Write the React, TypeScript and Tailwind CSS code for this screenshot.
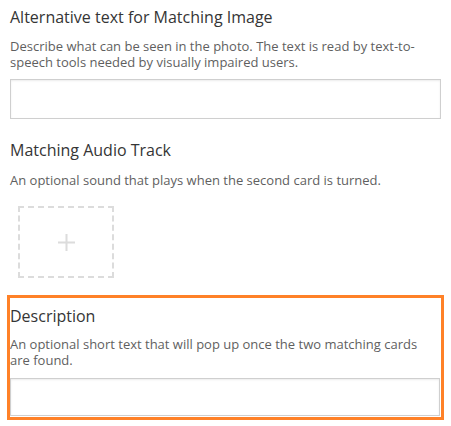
import React from "react";

const Field: React.FC<{ title: string; desc: string; descTop: string }> = ({ title, desc, descTop }) => (
  <>
    <h2 className="text-[16px] leading-[24px] font-normal text-[#353535]">{title}</h2>
    <p className={`${descTop} text-[13px] leading-[16px] text-[#5f5f5f]`}>{desc}</p>
  </>
);

export default function App() {
  return (
    <div className="w-[451px] h-[426px] overflow-hidden bg-white font-['Open_Sans',sans-serif]">
      <section className="pl-[10px] pr-[10px] pt-[5px]">
        <Field
          title="Alternative text for Matching Image"
          desc="Describe what can be seen in the photo. The text is read by text-to-speech tools needed by visually impaired users."
          descTop="mt-[9px]"
        />
        <input
          type="text"
          className="mt-[9px] block h-[40px] w-[431px] border border-[#cfcfcf] bg-white shadow-[inset_0_1px_2px_rgba(0,0,0,0.08)] outline-none"
        />
      </section>

      <section className="pl-[10px] pr-[10px] pt-[19px]">
        <Field
          title="Matching Audio Track"
          desc="An optional sound that plays when the second card is turned."
          descTop="mt-[10px]"
        />
        <button className="ml-[8px] mt-[18px] flex h-[72px] w-[96px] items-center justify-center border-2 border-dashed border-[#dcdcdc] bg-white">
          <svg width="17" height="17" viewBox="0 0 17 17">
            <path d="M8.5 0v17M0 8.5h17" stroke="#dcdcdc" strokeWidth="2" />
          </svg>
        </button>
      </section>

      <section className="ml-[7px] mt-[17px] w-[437px] border-[3px] border-[#ff8128] pr-[1px] pb-[1px] pt-[6px]">
        <Field
          title="Description"
          desc="An optional short text that will pop up once the two matching cards are found."
          descTop="mt-[8px]"
        />
        <input
          type="text"
          className="mt-[10px] block h-[38px] w-[430px] border border-[#cfcfcf] bg-white shadow-[inset_0_1px_2px_rgba(0,0,0,0.08)] outline-none"
        />
      </section>
    </div>
  );
}
